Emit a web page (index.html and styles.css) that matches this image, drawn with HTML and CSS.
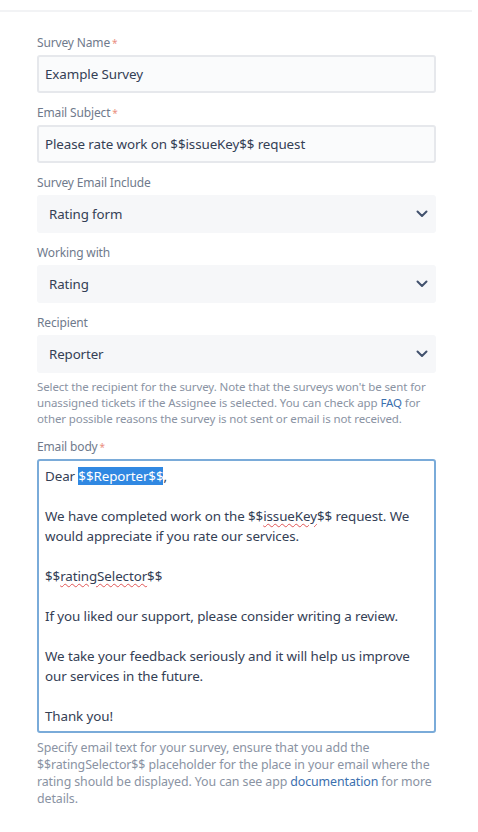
FILE: index.html
```html
<!DOCTYPE html>
<html>
<head>
<meta charset="utf-8">
<link rel="stylesheet" href="styles.css">
</head>
<body>
<div class="topline"></div>
<form class="form">
  <div class="field">
    <label class="label">Survey Name<span class="req">*</span></label>
    <div class="input">Example Survey</div>
  </div>
  <div class="field">
    <label class="label">Email Subject<span class="req">*</span></label>
    <div class="input">Please rate work on $$issueKey$$ request</div>
  </div>
  <div class="field">
    <label class="label">Survey Email Include</label>
    <div class="select"><span>Rating form</span><svg class="chev" width="12" height="8" viewBox="0 0 12 8"><path d="M1.5 1.5 L6 6 L10.5 1.5" fill="none" stroke="#42526e" stroke-width="2" stroke-linecap="round" stroke-linejoin="round"/></svg></div>
  </div>
  <div class="field">
    <label class="label">Working with</label>
    <div class="select"><span>Rating</span><svg class="chev" width="12" height="8" viewBox="0 0 12 8"><path d="M1.5 1.5 L6 6 L10.5 1.5" fill="none" stroke="#42526e" stroke-width="2" stroke-linecap="round" stroke-linejoin="round"/></svg></div>
  </div>
  <div class="field">
    <label class="label">Recipient</label>
    <div class="select"><span>Reporter</span><svg class="chev" width="12" height="8" viewBox="0 0 12 8"><path d="M1.5 1.5 L6 6 L10.5 1.5" fill="none" stroke="#42526e" stroke-width="2" stroke-linecap="round" stroke-linejoin="round"/></svg></div>
    <p class="help">Select the recipient for the survey. Note that the surveys won't be sent for unassigned tickets if the Assignee is selected. You can check app <span class="link">FAQ</span> for other possible reasons the survey is not sent or email is not received.</p>
  </div>
  <div class="field">
    <label class="label">Email body<span class="req">*</span></label>
    <div class="textarea">
      <div class="line">Dear <span class="sel">$$Reporter$$</span>,</div>
      <div class="line">&nbsp;</div>
      <div class="line">We have completed work on the $$<span class="spell">issueKey</span>$$ request. We</div>
      <div class="line">would appreciate if you rate our services.</div>
      <div class="line">&nbsp;</div>
      <div class="line">$$<span class="spell">ratingSelector</span>$$</div>
      <div class="line">&nbsp;</div>
      <div class="line">If you liked our support, please consider writing a review.</div>
      <div class="line">&nbsp;</div>
      <div class="line">We take your feedback seriously and it will help us improve</div>
      <div class="line">our services in the future.</div>
      <div class="line">&nbsp;</div>
      <div class="line">Thank you!</div>
    </div>
    <p class="help help2">Specify email text for your survey, ensure that you add the $$ratingSelector$$ placeholder for the place in your email where the rating should be displayed. You can see app <span class="link">documentation</span> for more details.</p>
  </div>
</form>
</body>
</html>
```
FILE: styles.css
```css
html, body {
  margin: 0;
  padding: 0;
  background: #ffffff;
}
body {
  font-family: "Noto Sans", "Open Sans", sans-serif;
  color: #2b3950;
}
.topline {
  margin-top: 10px;
  width: 472px;
  height: 2px;
  background: #f2f3f5;
}
.form {
  display: flex;
  flex-direction: column;
  gap: 12px;
  width: 399px;
  margin: 23px 0 0 37px;
}
.field {
  display: flex;
  flex-direction: column;
}
.label {
  font-size: 12px;
  line-height: 16px;
  height: 16px;
  color: #6f7a8c;
  margin-bottom: 4px;
  letter-spacing: -0.15px;
}
.req {
  color: #ea8f80;
  margin-left: 2px;
  font-size: 10px;
  vertical-align: top;
}
.input {
  box-sizing: border-box;
  height: 38px;
  border: 2px solid #e6e8ec;
  border-radius: 3px;
  background: #fafbfc;
  padding: 0 6px;
  font-size: 13.4px;
  line-height: 34px;
  color: #344055;
  letter-spacing: -0.1px;
}
.select {
  box-sizing: border-box;
  height: 38px;
  border-radius: 3px;
  background: #f6f7f9;
  padding: 0 8px 0 12px;
  font-size: 13.3px;
  color: #344055;
  display: flex;
  align-items: center;
  justify-content: space-between;
  letter-spacing: -0.1px;
}
.help {
  margin: 6px 0 0 0;
  font-size: 11.5px;
  line-height: 16px;
  color: #8a93a3;
  letter-spacing: -0.1px;
}
.help2 {
  font-size: 12.4px;
  line-height: 17px;
  margin-top: 6px;
}
.link {
  color: #3b6fae;
}
.textarea {
  box-sizing: border-box;
  height: 274px;
  border: 2px solid #7aabd9;
  border-radius: 3px;
  background: #ffffff;
  padding: 5px 6px;
  font-size: 13.4px;
  line-height: 20px;
  color: #344055;
  letter-spacing: -0.1px;
}
.line {
  height: 20px;
  white-space: nowrap;
}
.sel {
  background: #3088e2;
  color: #ffffff;
}
.spell {
  text-decoration: underline wavy #e05555;
  text-decoration-thickness: 1px;
  text-underline-offset: 2px;
}
```
